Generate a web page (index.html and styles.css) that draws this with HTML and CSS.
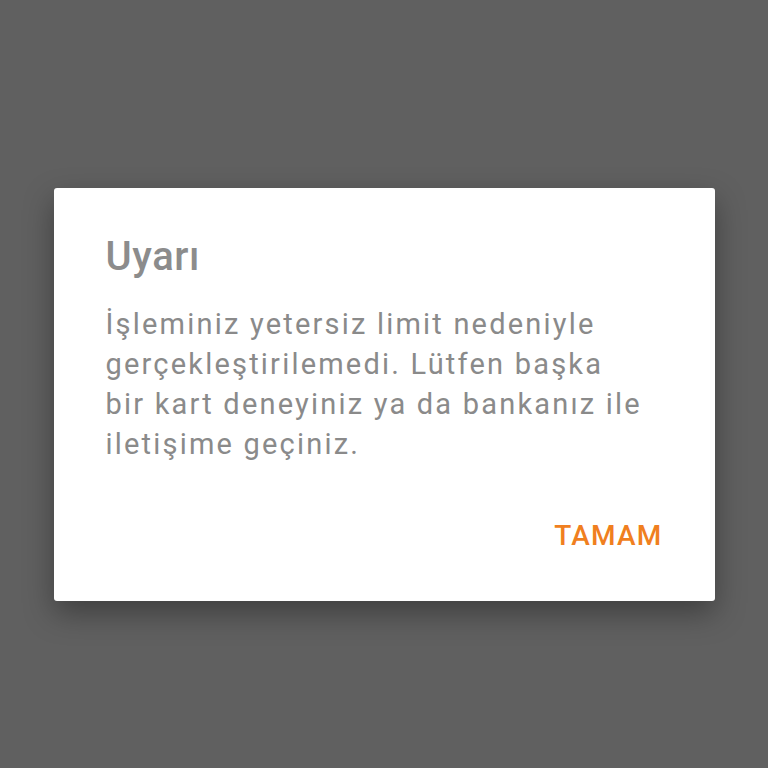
FILE: index.html
```html
<!DOCTYPE html>
<html lang="tr">
<head>
    <meta charset="UTF-8">
    <meta name="viewport" content="width=device-width, initial-scale=1.0">
    <title>Uyarı</title>
    <link rel="stylesheet" href="styles.css">
</head>
<body>
    <div class="dialog">
        <h1 class="dialog-title">Uyarı</h1>
        <p class="dialog-message">İşleminiz yetersiz limit nedeniyle<br>gerçekleştirilemedi. Lütfen başka<br>bir kart deneyiniz ya da bankanız ile<br>iletişime geçiniz.</p>
        <div class="dialog-actions">
            <a href="#" class="dialog-button">TAMAM</a>
        </div>
    </div>
</body>
</html>
```

FILE: styles.css
```css
body {
    margin: 0;
    padding: 0;
    height: 768px;
    background-color: #606060;
    font-family: Roboto, "Noto Sans", Arial, sans-serif;
    display: flex;
    justify-content: center;
    align-items: flex-start;
}

.dialog {
    margin-top: 188px;
    width: 661px;
    height: 413px;
    box-sizing: border-box;
    padding: 45px 52px 0 52px;
    background-color: #ffffff;
    border-radius: 3px;
    box-shadow: 0 12px 30px rgba(0, 0, 0, 0.35);
    display: flex;
    flex-direction: column;
}

.dialog-title {
    margin: 0;
    font-size: 40px;
    line-height: 48px;
    font-weight: 500;
    letter-spacing: 0.6px;
    color: #8c8c8c;
}

.dialog-message {
    margin: 23px 0 0 0;
    font-size: 29px;
    line-height: 40px;
    letter-spacing: 2.2px;
    color: #8a8a8a;
}

.dialog-actions {
    margin-top: 52px;
    display: flex;
    justify-content: flex-end;
}

.dialog-button {
    font-size: 28px;
    line-height: 40px;
    font-weight: 500;
    letter-spacing: 1.2px;
    color: #f07f20;
    text-decoration: none;
}
```
